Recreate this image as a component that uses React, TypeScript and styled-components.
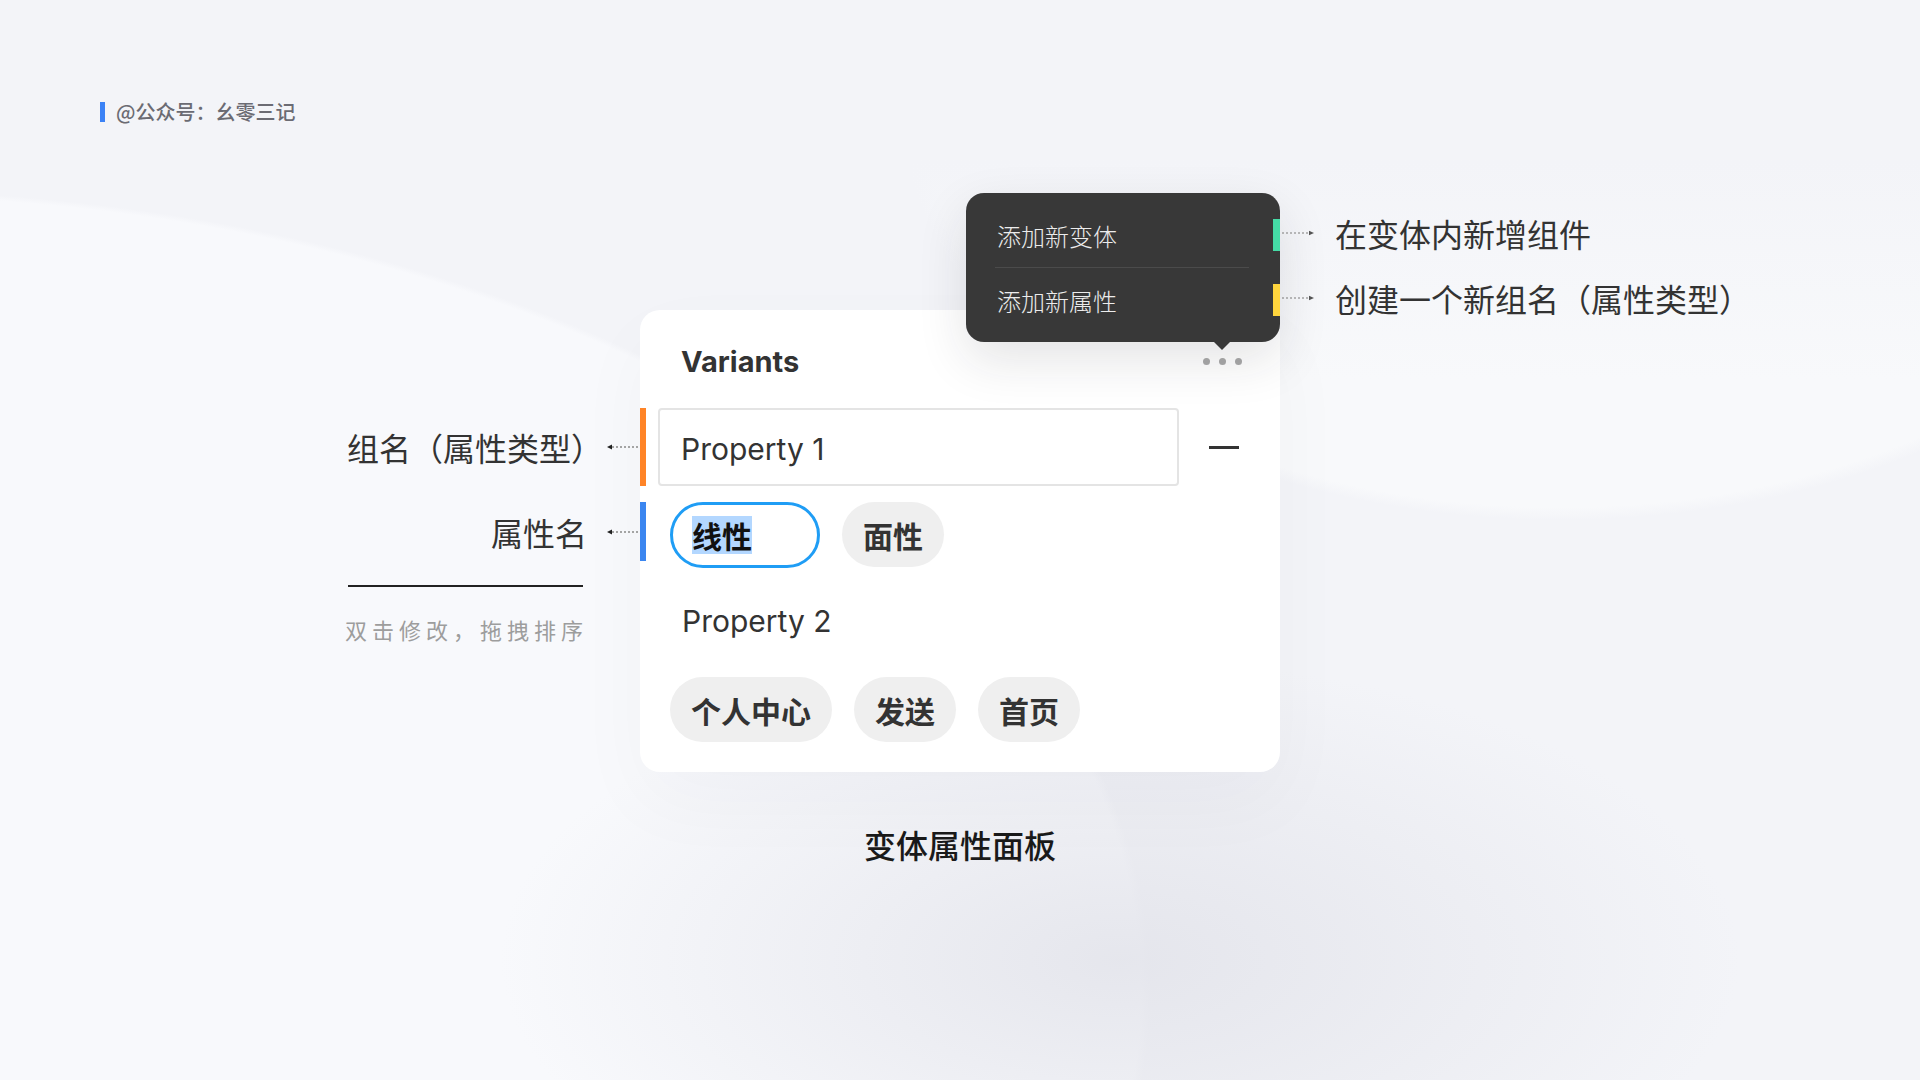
import React from "react";
import styled, { createGlobalStyle } from "styled-components";

const GlobalStyle = createGlobalStyle`
  html, body { margin: 0; padding: 0; }
  body {
    width: 1920px;
    height: 1080px;
    overflow: hidden;
    font-family: Inter, "Noto Sans CJK SC", sans-serif;
    background:
      radial-gradient(ellipse 620px 300px at 1120px 960px, rgba(226, 227, 234, 0.85), rgba(226, 227, 234, 0) 100%),
      linear-gradient(to bottom, #f3f4f8 0px, #f3f4f8 160px, rgba(243, 244, 248, 0) 380px) 880px 0 / 1040px 1080px no-repeat,
      radial-gradient(ellipse 660px 420px at 1560px 100px, #f8f9fb 97%, rgba(248, 249, 251, 0) 100%),
      radial-gradient(ellipse 1300px 800px at -150px 990px, #f8f9fc 99.3%, rgba(248, 249, 252, 0) 100%),
      #f3f4f8;
  }
`;

const Page = styled.div`
  width: 1920px;
  height: 1080px;
  box-sizing: border-box;
  padding-top: 102px;
  display: flex;
  flex-direction: column;
`;

const SourceTag = styled.div`
  margin-left: 100px;
  height: 20px;
  display: flex;
  align-items: center;
  gap: 11px;
`;

const SourceBar = styled.span`
  width: 5px;
  height: 20px;
  background: #3b82f6;
`;

const SourceText = styled.span`
  font-family: "Noto Sans CJK SC", sans-serif;
  font-size: 20px;
  line-height: 20px;
  font-weight: 500;
  color: #6b6b73;
`;

const Stage = styled.div`
  margin-top: 188px;
  display: grid;
  grid-template-columns: 1fr 640px 1fr;
  align-items: start;
`;

const LeftNotes = styled.div`
  justify-self: end;
  padding-top: 98px;
  display: flex;
  flex-direction: column;
  align-items: flex-end;
`;

const NoteRow = styled.div<{ $h: number; $mt?: number }>`
  height: ${(p) => p.$h}px;
  margin-top: ${(p) => p.$mt ?? 0}px;
  display: flex;
  align-items: center;
  gap: 20px;
`;

const NoteText = styled.span<{ $trim?: number }>`
  font-family: "Noto Sans CJK SC", sans-serif;
  font-size: 32px;
  line-height: 40px;
  color: #333;
  white-space: nowrap;
  margin-right: ${(p) => -(p.$trim ?? 0)}px;
`;

const Rule = styled.div`
  width: 235px;
  height: 2px;
  background: #222;
  margin-top: 24px;
  margin-right: 57px;
`;

const Hint = styled.div`
  margin-top: 30px;
  margin-right: 52px;
  font-family: "Noto Sans CJK SC", sans-serif;
  font-size: 22px;
  line-height: 24px;
  letter-spacing: 5px;
  color: #9d9d9d;
  white-space: nowrap;
`;

const Card = styled.div`
  position: relative;
  width: 640px;
  box-sizing: border-box;
  background: #ffffff;
  border-radius: 20px;
  padding: 24px 0 30px;
  box-shadow: 0 30px 80px rgba(40, 40, 60, 0.03);
`;

const Header = styled.div`
  height: 54px;
  display: flex;
  align-items: center;
  justify-content: space-between;
  padding: 0 38px 0 41px;
`;

const Title = styled.span`
  font-size: 29px;
  font-weight: 700;
  color: #333;
`;

const Dots = styled.div`
  display: flex;
  gap: 9px;
`;

const Dot = styled.span`
  width: 7px;
  height: 7px;
  border-radius: 50%;
  background: #a9a9a9;
`;

const FieldRow = styled.div`
  margin-top: 20px;
  height: 78px;
  display: flex;
  align-items: center;
`;

const Marker = styled.span<{ $color: string; $h: number }>`
  flex: none;
  width: 6px;
  height: ${(p) => p.$h}px;
  background: ${(p) => p.$color};
`;

const Field = styled.div`
  margin-left: 12px;
  width: 521px;
  height: 78px;
  box-sizing: border-box;
  border: 2px solid #e4e4e4;
  border-radius: 4px;
  padding: 3px 0 0 21px;
  display: flex;
  align-items: center;
  font-size: 30px;
  color: #333;
`;

const Minus = styled.span`
  margin-left: 30px;
  width: 30px;
  height: 3px;
  background: #333;
`;

const ChipRow = styled.div<{ $mt: number }>`
  margin-top: ${(p) => p.$mt}px;
  display: flex;
  align-items: flex-start;
`;

const ChipGroup = styled.div<{ $indent: number }>`
  margin-left: ${(p) => p.$indent}px;
  display: flex;
  gap: 22px;
`;

const Chip = styled.span`
  height: 65px;
  box-sizing: border-box;
  padding: 0 21px;
  border-radius: 33px;
  background: #efefef;
  display: inline-flex;
  align-items: center;
  font-family: "Noto Sans CJK SC", sans-serif;
  font-size: 30px;
  font-weight: 700;
  color: #333;
  white-space: nowrap;
`;

const EditingChip = styled(Chip)`
  width: 150px;
  height: 66px;
  padding: 0 0 0 19px;
  background: #ffffff;
  border: 3px solid #1f9df5;
`;

const Selection = styled.span`
  background: #b3d7ff;
  color: #111;
  line-height: 38px;
`;

const SubTitle = styled.div`
  margin-top: 33px;
  height: 40px;
  padding-left: 42px;
  display: flex;
  align-items: center;
  font-size: 30px;
  color: #333;
`;

const Popover = styled.div`
  position: absolute;
  left: 326px;
  top: -117px;
  display: flex;
  align-items: flex-start;
`;

const Menu = styled.div`
  position: relative;
  width: 314px;
  box-sizing: border-box;
  padding: 10px 0;
  background: #383838;
  border-radius: 18px;
  box-shadow: 0 18px 50px rgba(30, 30, 40, 0.12);

  &::after {
    content: "";
    position: absolute;
    left: 248px;
    bottom: -8px;
    border-left: 8px solid transparent;
    border-right: 8px solid transparent;
    border-top: 8px solid #383838;
  }
`;

const MenuItem = styled.div`
  height: 64px;
  display: flex;
  align-items: center;
  justify-content: space-between;
  padding-left: 31px;
  font-family: "Noto Sans CJK SC", sans-serif;
  font-size: 24px;
  font-weight: 300;
  color: #ececec;
`;

const ItemMarker = styled.span<{ $color: string }>`
  width: 7px;
  height: 32px;
  background: ${(p) => p.$color};
`;

const MenuDivider = styled.div`
  height: 1px;
  background: #4b4b4b;
  margin: 0 31px 0 29px;
`;

const Callouts = styled.div`
  margin-left: 2px;
  padding-top: 8px;
  display: flex;
  flex-direction: column;
  gap: 1px;
`;

const Callout = styled.div`
  height: 64px;
  display: flex;
  align-items: center;
  gap: 21px;
`;

const Caption = styled.div`
  margin-top: 52px;
  text-align: center;
  font-family: "Noto Sans CJK SC", sans-serif;
  font-size: 32px;
  line-height: 40px;
  font-weight: 500;
  color: #1a1a1a;
`;

const DottedArrow = ({ dir }: { dir: "left" | "right" }) =>
  dir === "left" ? (
    <svg width="33" height="8" viewBox="0 0 33 8">
      <line x1="5" y1="4" x2="33" y2="4" stroke="#a6a6a6" strokeWidth="2" strokeDasharray="2 2" />
      <polygon points="0,4 5,1.5 5,6.5" fill="#222" />
    </svg>
  ) : (
    <svg width="32" height="8" viewBox="0 0 32 8">
      <line x1="0" y1="4" x2="27" y2="4" stroke="#a6a6a6" strokeWidth="1.5" strokeDasharray="2 2" />
      <polygon points="32,4 27,1.8 27,6.2" fill="#555" />
    </svg>
  );

export default function App() {
  return (
    <>
      <GlobalStyle />
      <Page>
        <SourceTag>
          <SourceBar />
          <SourceText>@公众号：幺零三记</SourceText>
        </SourceTag>

        <Stage>
          <LeftNotes>
            <NoteRow $h={78}>
              <NoteText $trim={16}>组名（属性类型）</NoteText>
              <DottedArrow dir="left" />
            </NoteRow>
            <NoteRow $h={59} $mt={16}>
              <NoteText>属性名</NoteText>
              <DottedArrow dir="left" />
            </NoteRow>
            <Rule />
            <Hint>双击修改，拖拽排序</Hint>
          </LeftNotes>

          <Card>
            <Popover>
              <Menu>
                <MenuItem>
                  添加新变体
                  <ItemMarker $color="#45dba6" />
                </MenuItem>
                <MenuDivider />
                <MenuItem>
                  添加新属性
                  <ItemMarker $color="#ffd53d" />
                </MenuItem>
              </Menu>
              <Callouts>
                <Callout>
                  <DottedArrow dir="right" />
                  <NoteText>在变体内新增组件</NoteText>
                </Callout>
                <Callout>
                  <DottedArrow dir="right" />
                  <NoteText>创建一个新组名（属性类型）</NoteText>
                </Callout>
              </Callouts>
            </Popover>

            <Header>
              <Title>Variants</Title>
              <Dots>
                <Dot />
                <Dot />
                <Dot />
              </Dots>
            </Header>

            <FieldRow>
              <Marker $color="#ff8427" $h={78} />
              <Field>Property 1</Field>
              <Minus />
            </FieldRow>

            <ChipRow $mt={16}>
              <Marker $color="#3b86f0" $h={59} />
              <ChipGroup $indent={24}>
                <EditingChip>
                  <Selection>线性</Selection>
                </EditingChip>
                <Chip>面性</Chip>
              </ChipGroup>
            </ChipRow>

            <SubTitle>Property 2</SubTitle>

            <ChipRow $mt={36}>
              <ChipGroup $indent={30}>
                <Chip>个人中心</Chip>
                <Chip>发送</Chip>
                <Chip>首页</Chip>
              </ChipGroup>
            </ChipRow>
          </Card>
          <div />
        </Stage>

        <Caption>变体属性面板</Caption>
      </Page>
    </>
  );
}
